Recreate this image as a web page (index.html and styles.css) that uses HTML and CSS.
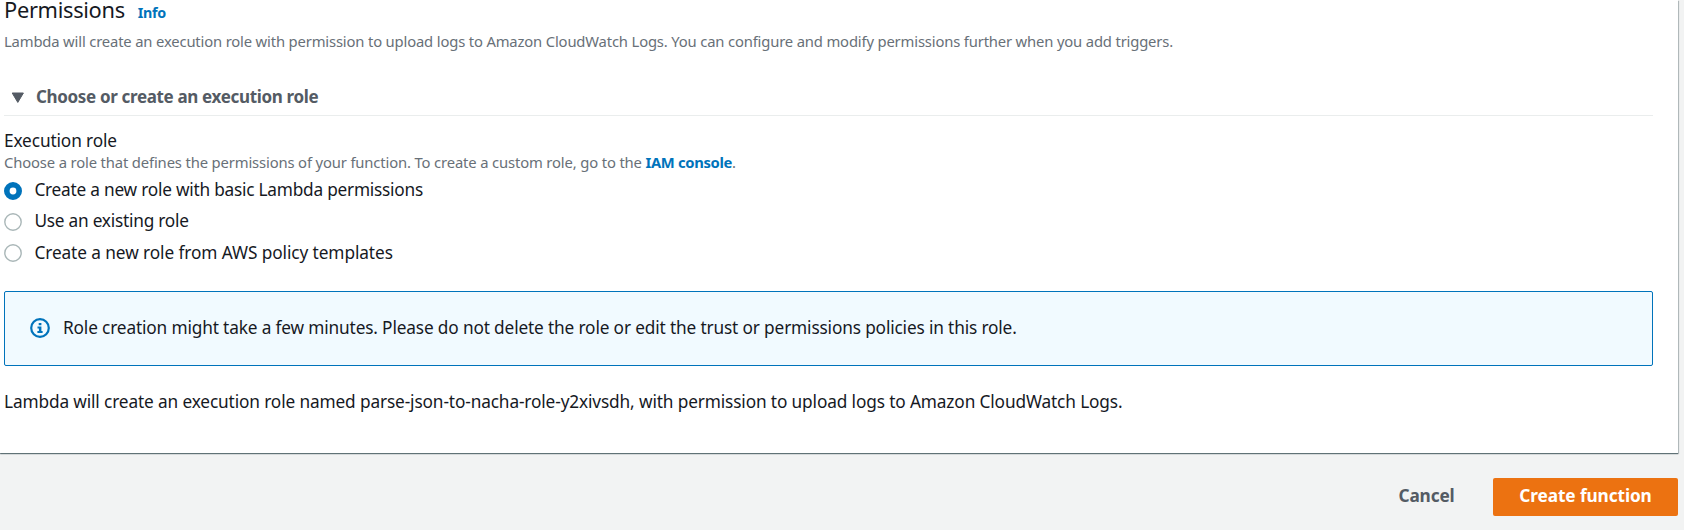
FILE: index.html
```html
<!DOCTYPE html>
<html lang="en">
<head>
<meta charset="utf-8">
<title>Create function</title>
<link rel="stylesheet" href="styles.css">
</head>
<body>
<main class="card">
  <header class="heading">
    <h2 class="title">Permissions</h2>
    <a class="link info">Info</a>
  </header>
  <p class="description">Lambda will create an execution role with permission to upload logs to Amazon CloudWatch Logs. You can configure and modify permissions further when you add triggers.</p>
  <div class="expander">
    <svg class="caret" width="14" height="12" viewBox="0 0 14 12"><path d="M1.2 1h11.2L6.8 10.4z" fill="#545b64" stroke="#545b64" stroke-linejoin="round"/></svg>
    <h3 class="expander-title">Choose or create an execution role</h3>
  </div>
  <section class="field">
    <div class="label">Execution role</div>
    <div class="hint">Choose a role that defines the permissions of your function. To create a custom role, go to the <a class="link iam">IAM console</a>.</div>
    <div class="options">
      <label class="option basic"><svg class="radio" width="18" height="18" viewBox="0 0 18 18"><circle cx="9" cy="9" r="6.2" fill="#fff" stroke="#0073bb" stroke-width="5.6"/></svg>Create a new role with basic Lambda permissions</label>
      <label class="option existing"><svg class="radio" width="18" height="18" viewBox="0 0 18 18"><circle cx="9" cy="9" r="8.2" fill="#fff" stroke="#aab7b8" stroke-width="1.4"/></svg>Use an existing role</label>
      <label class="option template"><svg class="radio" width="18" height="18" viewBox="0 0 18 18"><circle cx="9" cy="9" r="8.2" fill="#fff" stroke="#aab7b8" stroke-width="1.4"/></svg>Create a new role from AWS policy templates</label>
    </div>
  </section>
  <div class="alert">
    <svg class="alert-icon" width="20" height="20" viewBox="0 0 20 20"><circle cx="10" cy="10" r="8.8" fill="none" stroke="#0073bb" stroke-width="2.2"/><path d="M8.7 5h2.7v2.3H8.7zM7.5 8.6h3.9v4.3h1.2v2H7.4v-2h1.5v-2.4H7.5z" fill="#0073bb"/></svg>
    <span class="alert-text">Role creation might take a few minutes. Please do not delete the role or edit the trust or permissions policies in this role.</span>
  </div>
  <p class="summary">Lambda will create an execution role named parse-json-to-nacha-role-y2xivsdh, with permission to upload logs to Amazon CloudWatch Logs.</p>
</main>
<footer class="actions">
  <button class="button cancel">Cancel</button>
  <button class="button primary">Create function</button>
</footer>
</body>
</html>
```
FILE: styles.css
```css
* { box-sizing: border-box; }

body {
  margin: 0;
  height: 530px;
  overflow: hidden;
  background: #f2f3f3;
  color: #16191f;
  font: 17.25px/24px "Noto Sans", sans-serif;
  white-space: nowrap;
}

h2, h3, p { margin: 0; }

.card {
  width: 1678px;
  height: 453px;
  padding: 0 25px 0 4px;
  background: #fff;
  box-shadow: 0 1px 1px 0 rgba(0, 28, 36, 0.5), 1px 1px 1px 0 rgba(0, 28, 36, 0.2);
}

.heading {
  display: flex;
  align-items: baseline;
  gap: 13px;
  height: 20px;
}

.title {
  font-size: 21.8px;
  font-weight: 400;
  line-height: 20px;
  letter-spacing: -0.3px;
}

.link { color: #0073bb; font-weight: 700; }

.info { font-size: 14.3px; line-height: 18px; letter-spacing: -0.3px; }

.description {
  margin-top: 11px;
  color: #687078;
  font-size: 14.8px;
  line-height: 20px;
  letter-spacing: -0.162px;
}

.expander {
  display: flex;
  align-items: center;
  gap: 11px;
  height: 33px;
  margin-top: 32px;
  padding: 2px 0 6px 7px;
  border-bottom: 1px solid #eaeded;
}

.caret { margin-top: 2px; }

.expander-title {
  color: #545b64;
  font-size: 17px;
  letter-spacing: -0.34px;
}

.field { margin-top: 14px; }

.label { line-height: 22px; letter-spacing: -0.125px; }

.hint {
  margin-top: -1px;
  color: #687078;
  font-size: 14.8px;
  line-height: 22px;
  letter-spacing: -0.144px;
}

.iam { letter-spacing: -0.345px; }

.options {
  display: grid;
  grid-template-rows: repeat(3, 24px);
  gap: 7.4px;
  margin-top: 5px;
}

.option { display: flex; align-items: center; gap: 12.4px; }
.basic { letter-spacing: -0.23px; }
.existing { letter-spacing: -0.23px; }
.template { letter-spacing: -0.09px; }

.radio { margin-top: 1px; }

.alert {
  display: flex;
  align-items: center;
  gap: 13px;
  height: 75px;
  margin-top: 26.3px;
  padding: 0 25px 1px 25px;
  background: #f1faff;
  border: 1px solid #0073bb;
  border-radius: 2px;
}

.alert-text { letter-spacing: -0.152px; }

.summary { margin-top: 24px; letter-spacing: -0.132px; }

.actions {
  display: flex;
  justify-content: flex-end;
  gap: 12.5px;
  margin-top: 25px;
  padding-right: 6px;
}

.button {
  height: 38px;
  padding: 0 26px 2px;
  border: 0;
  border-radius: 2px;
  background: none;
  color: #545b64;
  font: 700 17.25px/24px "Noto Sans", sans-serif;
}

.cancel { letter-spacing: -0.17px; }

.primary {
  width: 185px;
  background: #ec7211;
  color: #fff;
  letter-spacing: -0.1px;
}
```
